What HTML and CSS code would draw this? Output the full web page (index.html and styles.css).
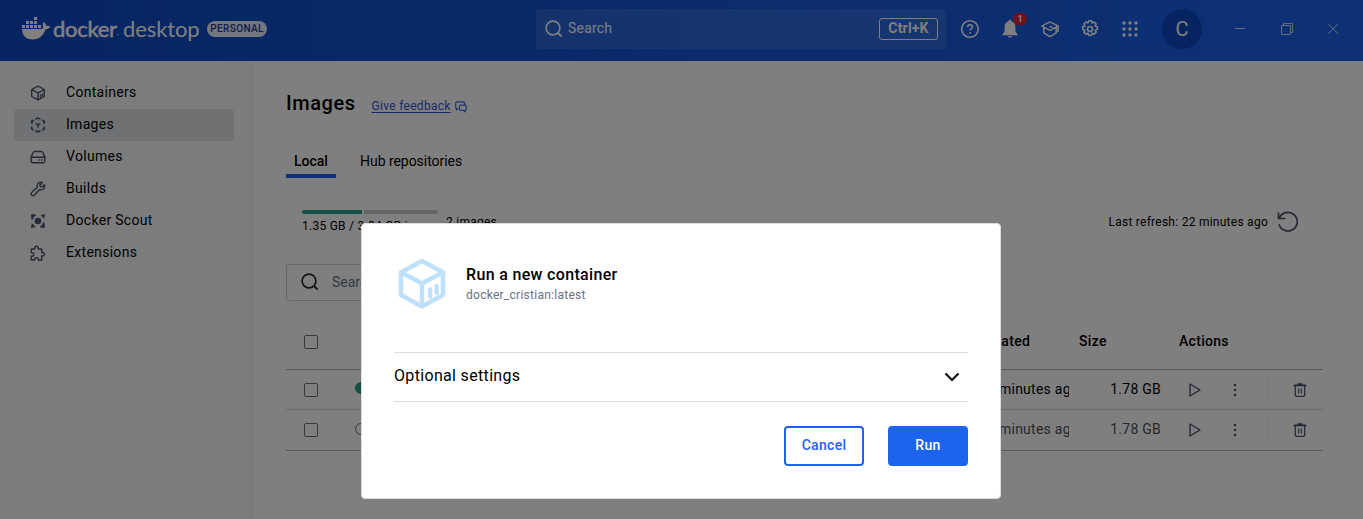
FILE: index.html
```html
<!DOCTYPE html>
<html lang="en">
<head>
<meta charset="utf-8">
<title>Docker Desktop</title>
<link rel="stylesheet" href="styles.css">
</head>
<body>
<svg class="defs" aria-hidden="true">
  <symbol id="play" viewBox="0 0 16 16"><path d="M3 2v12l10-6z" fill="none" stroke="currentColor" stroke-width="1.4" stroke-linejoin="round"/></symbol>
  <symbol id="more" viewBox="0 0 16 16"><circle cx="8" cy="3" r="1.3"/><circle cx="8" cy="8" r="1.3"/><circle cx="8" cy="13" r="1.3"/></symbol>
  <symbol id="trash" viewBox="0 0 16 16"><path d="M3.300 4v8.700q0 1.600 1.600 1.600h6.200q1.600 0 1.600-1.600V4" fill="none" stroke="currentColor" stroke-width="1.300"/><path d="M1.700 2.600h12.600v1.700H1.700zM5.500 1.200h5v1.600h-5z"/><path d="M6.700 6.500v5M9.300 6.500v5" stroke="currentColor" stroke-width="1.100"/></symbol>
  <symbol id="search" viewBox="0 0 18 18"><circle cx="8" cy="8" r="6.900" fill="none" stroke="currentColor" stroke-width="1.600"/><path d="M13 13l3.700 3.700" stroke="currentColor" stroke-width="1.800"/></symbol>
</svg>
<div class="app">
  <header class="topbar">
    <div class="brand">
      <svg class="whale" width="29" height="24" viewBox="0 0 29 24" fill="currentColor"><path d="M12 1h3v3h-3zM4 5h3v3H4zM8 5h3v3H8zM12 5h3v3h-3zM0 9h3v3H0zM4 9h3v3H4zM8 9h3v3H8zM12 9h3v3h-3zM16 9h3v3h-3z"/><path d="M0 13h18.500c1.600 0 2.600-.6 2.900-1.700-1-1.700-.9-3.700.3-5.300 1.600 1 2.300 2.300 2.300 3.800 1.500-.3 3-.1 4.300.7-.8 1.900-2.400 2.800-4.700 2.800C21.400 19.700 17.300 23.500 10.500 23.500 4 23.500.3 19.500 0 13z"/></svg>
      <span class="word-docker">docker</span><i class="reg"></i><span class="word-desktop">desktop</span>
      <span class="plan">PERSONAL</span>
    </div>
    <div class="global-search">
      <svg width="18" height="18"><use href="#search"/></svg>
      <span class="grow">Search</span>
      <kbd>Ctrl+K</kbd>
    </div>
    <nav class="tools">
      <span class="tool"><svg width="20" height="20" viewBox="0 0 20 20" fill="none" stroke="currentColor" stroke-width="1.600"><circle cx="10" cy="10" r="8.300"/><path d="M7.600 8.200c0-1.500 1-2.400 2.400-2.400s2.400.9 2.400 2.200c0 1.700-2.300 1.800-2.300 3.600"/><path d="M10.100 13v1.700"/></svg></span>
      <span class="tool"><svg width="20" height="20" viewBox="0 0 20 20" fill="currentColor"><path d="M10 .8c.9 0 1.400.6 1.400 1.400 2.500.6 4 2.700 4 5.400v5l2.400 3.100v.5H2.200v-.5l2.400-3.100v-5c0-2.700 1.500-4.800 4-5.400 0-.8.5-1.400 1.400-1.400zM7.500 17.200h5c-.4 1-1.400 1.400-2.500 1.400s-2.100-.4-2.500-1.400z"/></svg><span class="badge">1</span></span>
      <span class="tool"><svg width="20" height="20" viewBox="0 0 20 20" fill="none" stroke="currentColor" stroke-width="1.500" stroke-linejoin="round"><path d="M1.800 7.200 10 2.900l8.200 4.300-8.200 4.200zM3.800 8.500v5.400l6.200 3.700 6.200-3.700V8.500M18 7.500v5.500M9.500 7.200l4.500 2.200"/></svg></span>
      <span class="tool"><svg width="20" height="20" viewBox="0 0 20 20" fill="none" stroke="currentColor" stroke-width="1.600" stroke-linejoin="round"><circle cx="10" cy="10" r="2.500"/><path d="M8.600 1.800h2.800l.7 2.100 2-.9 2 2-1 1.900 2.200.8v2.700l-2.200.8 1 1.900-2 2-2-1-.7 2.200H8.600l-.7-2.200-2 1-2-2 1-1.900-2.200-.8V7.700l2.200-.8-1-1.900 2-2 2 .9z"/></svg></span>
      <span class="tool"><svg width="20" height="20" viewBox="0 0 20 20" fill="currentColor"><circle cx="4" cy="4" r="1.700"/><circle cx="10" cy="4" r="1.700"/><circle cx="16" cy="4" r="1.700"/><circle cx="4" cy="10" r="1.700"/><circle cx="10" cy="10" r="1.700"/><circle cx="16" cy="10" r="1.700"/><circle cx="4" cy="16" r="1.700"/><circle cx="10" cy="16" r="1.700"/><circle cx="16" cy="16" r="1.700"/></svg></span>
    </nav>
    <span class="avatar">C</span>
    <div class="window-controls">
      <svg width="12" height="12" viewBox="0 0 12 12"><path d="M1 5.500h10"/></svg>
      <svg width="12" height="12" viewBox="0 0 12 12"><path d="M.5 2.500h9v9h-9zM2.500 2.500v-2h9v9h-2"/></svg>
      <svg width="12" height="12" viewBox="0 0 12 12"><path d="M.8.500l10.500 10.500M11.300.500L.8 11"/></svg>
    </div>
  </header>
  <div class="body">
    <aside class="sidebar">
      <a class="item"><svg width="16" height="16" viewBox="0 0 16 16" fill="none" stroke="currentColor" stroke-width="1.400" stroke-linejoin="round"><path d="M8 1.200l6.300 3.300v7L8 14.900l-6.300-3.400v-7zM1.700 4.500L8 7.900l6.300-3.400M8 7.900v7M10.400 9.500v3M12.300 8.500v3"/></svg>Containers</a>
      <a class="item selected"><svg width="16" height="16" viewBox="0 0 16 16" fill="none" stroke="currentColor" stroke-width="1.500"><path d="M5.500 2.200L8 1l2.500 1.200M12.300 3l2 1.200v2.300M14.300 9.500v2.300l-2 1.200M10.500 13.800L8 15l-2.500-1.200M3.700 13l-2-1.200V9.500M1.700 6.500V4.200l2-1.200M5.800 6.600L8 7.800l2.200-1.200M8 7.800v2.600"/><path d="M6.500 14h3L8 15.500zM.9 4.200h2v2h-2zM13.100 4.200h2v2h-2z" fill="currentColor" stroke="none"/></svg>Images</a>
      <a class="item"><svg width="16" height="16" viewBox="0 0 16 16" fill="none" stroke="currentColor" stroke-width="1.400"><path d="M1.200 8L3 3.800Q3.400 2.500 4.800 2.500h6.400q1.400 0 1.800 1.300L14.800 8v4q0 1.700-1.700 1.700H2.900q-1.700 0-1.700-1.700zM1.200 8.300h13.600M8.500 11h1.300M11 11h1.700"/></svg>Volumes</a>
      <a class="item"><svg width="16" height="16" viewBox="0 0 16 16" fill="none" stroke="currentColor" stroke-width="1.400" stroke-linejoin="round"><path d="M12.300 1.600C9 .4 6.300 3 7.300 6.200L1.600 11.600c-1.500 1.700.8 4.100 2.600 2.700l5.400-5.700c3.300 1 5.900-1.700 4.800-4.900l-2.300 2.200-1.800-.4-.4-1.800z"/></svg>Builds</a>
      <a class="item"><svg width="16" height="16" viewBox="0 0 16 16" fill="currentColor"><circle cx="8" cy="8" r="3.300"/><path d="M10.500 2l4.700-.8-1 4.600zM1 15l.8-5 3.900 4z"/><path d="M2 6.500Q2.300 3 5.700 2M14 9.500q-.6 3.600-3.700 4.500M2 4.500V2h2.500M14 11.500V14h-2.500" fill="none" stroke="currentColor" stroke-width="1.700"/></svg>Docker Scout</a>
      <a class="item"><svg width="16" height="16" viewBox="0 0 16 16" fill="none" stroke="currentColor" stroke-width="1.400" stroke-linejoin="round"><path d="M1.300 4h3.500C4 .4 9 .4 8.200 4h3.500v3.500c3.600-.7 3.600 4.100 0 3.400V15H8.400c.5-3.200-4.100-3.200-3.600 0H1.300v-3.700c3.200.5 3.200-4.200 0-3.700z"/></svg>Extensions</a>
    </aside>
    <main class="content">
      <div class="heading"><h1>Images</h1><a class="feedback">Give feedback</a><svg class="chat" width="12" height="12" viewBox="0 0 12 12" fill="none" stroke="currentColor" stroke-width="1.200" stroke-linejoin="round"><path d="M3.500 7.700H2.700L1.500 9V7.500Q.7 7.300.7 6.500V2Q.7.800 2 .8h6.300q1.200 0 1.200 1.200v1.500M5.500 4.200h4.700q1 0 1 1v3q0 .9-.9 1v1.700L8.500 9.300h-3q-1 0-1-1v-3q0-1.100 1-1.100z"/></svg></div>
      <div class="tabs"><span class="tab active">Local</span><span class="tab">Hub repositories</span></div>
      <div class="status">
        <div class="usage"><div class="bar"><i class="used"></i><i class="free"></i></div><span>1.35 GB / 3.84 GB in use</span></div>
        <span class="count">2 images</span>
        <span class="refresh">Last refresh: 22 minutes ago</span>
        <svg class="reload" width="22" height="22" viewBox="0 0 22 22" fill="none" stroke="currentColor" stroke-width="1.700"><path d="M1.500 1.500v6h7M2.300 7.200A9.300 9.300 0 1 1 2 13.300"/></svg>
      </div>
      <div class="filter"><svg width="18" height="18"><use href="#search"/></svg><span>Search</span></div>
      <div class="table">
        <div class="row head"><i class="check"></i><span></span><span></span><span>Created</span><span class="size-head">Size</span><span class="actions-head">Actions</span></div>
        <div class="row"><i class="check"></i><i class="dot on"></i><span></span><span class="created">22 minutes ago</span><span class="size">1.78 GB</span><div class="actions"><svg width="16" height="16"><use href="#play"/></svg><svg width="16" height="16"><use href="#more"/></svg><i class="rule"></i><svg width="16" height="16"><use href="#trash"/></svg></div></div>
        <div class="row unused"><i class="check"></i><i class="dot"></i><span></span><span class="created">22 minutes ago</span><span class="size">1.78 GB</span><div class="actions"><svg width="16" height="16"><use href="#play"/></svg><svg width="16" height="16"><use href="#more"/></svg><i class="rule"></i><svg width="16" height="16"><use href="#trash"/></svg></div></div>
      </div>
    </main>
  </div>
</div>
<div class="backdrop">
  <section class="dialog">
    <div class="dialog-head">
      <svg width="56" height="56" viewBox="0 0 56 56" fill="none" stroke="#bfe0fb" stroke-width="4.500" stroke-linejoin="round"><path d="M28 5l21 11.300v22.700L28 50.500 7 39V16.300zM7 16.300L28 27.500l21-11.200M28 27.500v23"/><path d="M36.200 33.500v7M42.600 30v7" stroke-linecap="round" stroke-width="4.300"/></svg>
      <div><h2>Run a new container</h2><p>docker_cristian:latest</p></div>
    </div>
    <div class="optional"><span>Optional settings</span><svg width="16" height="16" viewBox="0 0 16 16" fill="none" stroke="#111" stroke-width="2.200"><path d="M1.500 4.500L8 11l6.500-6.500"/></svg></div>
    <div class="buttons"><button class="btn">Cancel</button><button class="btn primary">Run</button></div>
  </section>
</div>
</body>
</html>
```
FILE: styles.css
```css
* { box-sizing: border-box; }
body { margin: 0; height: 519px; overflow: hidden; font-family: Roboto, sans-serif; font-size: 14px; color: #000; background: #fff; }
.defs { position: absolute; width: 0; height: 0; }
symbol { fill: currentColor; }
svg { flex: none; display: block; }
.app { height: 519px; display: flex; flex-direction: column; }

.topbar { height: 61px; flex: none; display: flex; align-items: center; padding: 0 24px 3px 22px; background: linear-gradient(90deg, #0c49c2, #1d63ed); color: #fff; }
.brand { width: 514px; display: flex; align-items: center; font-family: Lato, sans-serif; font-size: 22px; line-height: 28px; }
.whale { margin-right: 2px; margin-top: -3px; }
.word-docker { width: 63px; -webkit-text-stroke: .5px #fff; letter-spacing: -.3px; }
.reg { width: 2px; height: 2px; margin: 11px 3px 0 1px; border-radius: 50%; background: #7f9de0; }
.word-desktop { width: 84px; letter-spacing: -.1px; padding-left: 1px; }
.plan { height: 16px; width: 60px; margin-left: 1px; border-radius: 8px; background: #e6ecf8; color: #1c3a9b; font: 500 10px/16px Roboto, sans-serif; letter-spacing: .4px; text-align: center; }
.global-search { width: 410px; height: 40px; border-radius: 4px; background: rgba(255,255,255,.1); display: flex; align-items: center; gap: 5px; padding: 0 8px 0 9px; letter-spacing: .2px; }
.grow { flex: 1; padding-bottom: 2px; }
kbd { width: 59px; height: 22px; border: 1px solid #fff; border-radius: 3px; font: 700 14px/19px Roboto, sans-serif; text-align: center; }
.tools { display: flex; margin-left: 4px; }
.tool { width: 40px; height: 40px; display: grid; place-items: center; position: relative; }
.badge { position: absolute; left: 23px; top: 4px; width: 14px; height: 12px; border-radius: 6px; background: #dd2635; font-size: 9px; line-height: 12px; font-weight: 700; text-align: center; }
.avatar { margin-left: 12px; width: 40px; height: 40px; border-radius: 50%; background: #0c49c2; font-size: 20px; line-height: 40px; text-align: center; }
.window-controls { flex: 1; display: flex; justify-content: space-between; padding-left: 32px; fill: none; stroke: #fff; opacity: .75; }

.body { flex: 1; display: flex; }
.sidebar { width: 254px; background: #f9f9fa; padding: 16px 20px 0 14px; }
.item { height: 32px; border-radius: 4px; display: flex; align-items: center; gap: 20px; padding-left: 16px; letter-spacing: .3px; padding-bottom: 2px; }
.item svg { color: #4a5568; margin-top: 2px; }
.selected { background: #e1e2e6; }
.content { flex: 1; padding: 28px 40px 0 32px; }
.heading { display: flex; align-items: center; height: 28px; }
h1 { margin: 0 16px 0 0; font-size: 20px; font-weight: 500; line-height: 26px; letter-spacing: .55px; }
.feedback { font-size: 12px; color: #3355d5; text-decoration: underline; text-underline-offset: 2px; letter-spacing: .3px; margin-top: 6px; }
.chat { color: #3d6edb; margin: 7px 0 0 4px; }
.tabs { display: flex; gap: 16px; margin-top: 27px; height: 34px; }
.tab { padding: 8px 8px 0; line-height: 18px; letter-spacing: -.04px; }
.active { width: 50px; font-weight: 500; border-bottom: 4px solid #1d63ed; }
.status { height: 44px; margin-top: 22px; padding: 0 24px 0 16px; display: flex; align-items: center; font-size: 12px; letter-spacing: .26px; }
.usage { width: 136px; white-space: nowrap; padding-bottom: 2px; }
.bar { display: flex; gap: 2px; margin: 0 0 5px; }
.bar i { height: 4px; border-radius: 2px 0 0 2px; }
.used { width: 60px; background: #2ca088; }
.bar .free { flex: 1; background: #c8c9d2; border-radius: 0 2px 2px 0; }
.count { flex: 1; padding-left: 8px; }
.reload { margin-left: 9px; color: #4a5568; }
.filter { width: 300px; height: 37px; margin-top: 20px; border: 1px solid #c9cacd; border-radius: 3px; display: flex; align-items: center; gap: 13px; padding: 0 0 2px 14px; color: #677285; }
.filter svg { color: #24272d; }
.table { margin-top: 12px; }
.row { display: grid; grid-template-columns: 50px 50px 1fr 90px 92px 162px; height: 40px; align-items: center; border-bottom: 1px solid #d9dadd; letter-spacing: .25px; }
.head { height: 57px; border-bottom: 1px solid #b4b5b8; font-weight: 500; letter-spacing: .3px; }
.head .check { margin-top: 2px; }
.unused { height: 41px; border-bottom-color: #b4b5b8; }
.unused .created, .unused .size { color: #4c4f55; }
.check { width: 14px; height: 14px; border: 1.5px solid #677285; border-radius: 2px; justify-self: center; }
.dot { width: 12px; height: 12px; border-radius: 50%; border: 1px solid #677285; justify-self: center; margin-bottom: 3px; }
.on { background: #2ca088; border-color: #2ca088; }
.created { overflow: hidden; white-space: nowrap; padding-bottom: 2px; }
.size { text-align: right; padding-bottom: 2px; }
.size-head { padding-left: 10px; }
.actions-head { padding-left: 18px; }
.actions { display: flex; align-items: center; padding-left: 26px; color: #4a5568; }
.actions svg + svg { margin-left: 24px; }
.rule { width: 1px; height: 24px; background: #e9eaec; margin: 0 24px; }

.backdrop { position: absolute; inset: 0; background: rgba(0,0,0,.5); }
.dialog { width: 640px; height: 276px; margin: 223px 0 0 361px; background: #fff; border: 1px solid #dcdcde; border-radius: 4px; padding: 32px 32px 0; }
.dialog-head { display: flex; gap: 16px; height: 96px; }
h2 { margin: 9px 0 3px; font-size: 16px; font-weight: 500; line-height: 20px; letter-spacing: .33px; }
p { margin: 0; font-size: 12px; line-height: 14px; color: #677285; letter-spacing: .26px; }
.optional { height: 50px; border: solid #dcdcde; border-width: 1px 0; display: flex; align-items: center; justify-content: space-between; font-size: 16px; letter-spacing: .33px; padding-right: 8px; }
.optional span { padding-bottom: 3px; }
.buttons { display: flex; justify-content: flex-end; gap: 24px; margin-top: 24px; }
.btn { width: 80px; height: 40px; border: 2px solid #1d63ed; border-radius: 4px; background: #fff; color: #2560ff; font: 500 14px/16px Roboto, sans-serif; letter-spacing: .3px; padding: 0 0 2px; }
.primary { background: #1d63ed; color: #fff; }
```
